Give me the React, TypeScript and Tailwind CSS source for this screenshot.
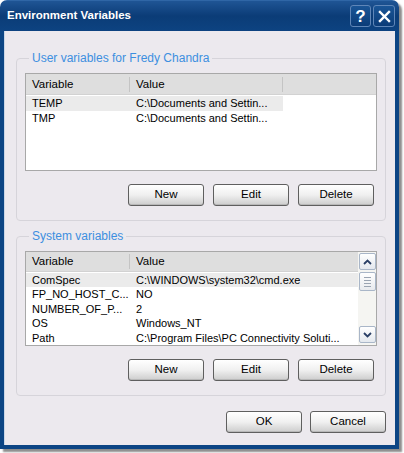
import { ReactNode } from 'react';

const font = { fontFamily: '"Liberation Sans", Arial, sans-serif' };

type Row = { name: string; value: string; selected?: boolean };

const userVars: Row[] = [
  { name: 'TEMP', value: 'C:\\Documents and Settin...', selected: true },
  { name: 'TMP', value: 'C:\\Documents and Settin...' },
];

const systemVars: Row[] = [
  { name: 'ComSpec', value: 'C:\\WINDOWS\\system32\\cmd.exe', selected: true },
  { name: 'FP_NO_HOST_C...', value: 'NO' },
  { name: 'NUMBER_OF_P...', value: '2' },
  { name: 'OS', value: 'Windows_NT' },
  { name: 'Path', value: 'C:\\Program Files\\PC Connectivity Soluti...' },
];

function XpButton({ children }: { children: ReactNode }) {
  return (
    <button
      type="button"
      className="w-[76px] h-[22px] rounded-[3px] border border-[#5f5f5f] bg-gradient-to-b from-white via-[#f0f0f0] to-[#cdcdcd] text-[11.5px] text-black shadow-[inset_0_-1px_0_#b8b8b8]"
    >
      {children}
    </button>
  );
}

function GroupBox({ title, className, children }: { title: string; className: string; children: ReactNode }) {
  return (
    <fieldset className={`mx-[12px] mr-[9px] rounded-[4px] border border-[#d6d4da] px-[8px] ${className}`}>
      <legend className="ml-[4px] px-[3px] text-[12px] leading-[13px] text-[#3d8fe0]">{title}</legend>
      {children}
    </fieldset>
  );
}

function Header({ wide }: { wide?: boolean }) {
  return (
    <div className="flex h-[21px] items-center bg-[#dedede] text-[11.5px] border-b border-[#d2d2d2]">
      <div className="w-[104px] pl-[6px] border-r border-[#c4c4c4] h-[15px] leading-[15px]">Variable</div>
      <div className={`${wide ? 'flex-1' : 'w-[153px] border-r border-[#c4c4c4]'} pl-[6px] h-[15px] leading-[15px]`}>Value</div>
      {!wide && <div className="flex-1" />}
    </div>
  );
}

function Rows({ rows, rowH, wide }: { rows: Row[]; rowH: string; wide?: boolean }) {
  return (
    <div className="flex flex-col pt-[1px]">
      {rows.map((r) => (
        <div key={r.name} className={`flex items-center ${rowH} text-[11px]`}>
          <div className={`flex ${wide ? 'flex-1' : 'w-[257px]'} h-full items-center ${r.selected ? 'bg-[#ebebeb]' : ''}`}>
            <div className="w-[104px] shrink-0 pl-[6px] whitespace-nowrap">{r.name}</div>
            <div className="flex-1 pl-[6px] whitespace-nowrap">{r.value}</div>
          </div>
          {!wide && <div className="flex-1" />}
        </div>
      ))}
    </div>
  );
}

function ScrollBtn({ up }: { up?: boolean }) {
  return (
    <div className="h-[17px] w-[17px] rounded-[2px] border border-[#a9b6c8] bg-gradient-to-b from-white to-[#e4e8ee] flex items-center justify-center">
      <svg width="9" height="6" viewBox="0 0 9 6">
        <path
          d={up ? 'M1 5 L4.5 1.5 L8 5' : 'M1 1 L4.5 4.5 L8 1'}
          fill="none"
          stroke="#2a3f66"
          strokeWidth="1.8"
        />
      </svg>
    </div>
  );
}

function Scrollbar() {
  return (
    <div className="w-[18px] flex flex-col items-center bg-[#f5f5f2] pt-[1px] pb-[2px]">
      <ScrollBtn up />
      <div className="mt-[2px] h-[19px] w-[17px] rounded-[2px] border border-[#a9b6c8] bg-gradient-to-b from-white to-[#e8eaee] flex flex-col items-center justify-center gap-[2px]">
        <div className="h-px w-[7px] bg-[#9aa4b2]" />
        <div className="h-px w-[7px] bg-[#9aa4b2]" />
        <div className="h-px w-[7px] bg-[#9aa4b2]" />
        <div className="h-px w-[7px] bg-[#9aa4b2]" />
      </div>
      <div className="flex-1" />
      <ScrollBtn />
    </div>
  );
}

export default function App() {
  return (
    <div className="w-[404px] h-[453px] bg-white text-black" style={font}>
      <div className="w-[399px] h-[449px] flex flex-col rounded-t-[7px] overflow-hidden shadow-[3px_3px_2px_rgba(0,0,0,0.45)]">
        {/* title bar */}
        <div className="h-[31px] flex items-center pl-[7px] pr-[4px] bg-gradient-to-b from-[#1f5595] via-[#0b3c77] to-[#0d4381] border-t border-[#2f66a6]">
          <span className="text-white font-bold text-[11.5px]">Environment Variables</span>
          <div className="ml-auto flex gap-[2px]">
            <div className="w-[21px] h-[22px] rounded-[3px] border border-[#5f86b8] bg-gradient-to-b from-[#1a5596] to-[#0b3c78] flex items-center justify-center text-white font-bold text-[17px] leading-none">
              ?
            </div>
            <div className="w-[22px] h-[22px] rounded-[3px] border border-[#5f86b8] bg-gradient-to-b from-[#1a5596] to-[#0b3c78] flex items-center justify-center">
              <svg width="13" height="13" viewBox="0 0 13 13">
                <path d="M2 2 L11 11 M11 2 L2 11" stroke="white" strokeWidth="2.4" strokeLinecap="square" />
              </svg>
            </div>
          </div>
        </div>

        {/* client */}
        <div className="flex-1 flex flex-col bg-[#ece9ee] border-x-4 border-b-4 border-[#0c4584] shadow-[inset_1px_0_0_#c9d6e6]">
          <GroupBox title="User variables for Fredy Chandra" className="mt-[21px] pb-[14px]">
            <div className="mt-[8px] h-[98px] border border-[#a8a8a8] bg-white">
              <Header />
              <Rows rows={userVars} rowH="h-[15px]" />
            </div>
            <div className="mt-[13px] flex justify-end gap-[9px] pr-[3px]">
              <XpButton>New</XpButton>
              <XpButton>Edit</XpButton>
              <XpButton>Delete</XpButton>
            </div>
          </GroupBox>

          <GroupBox title="System variables" className="mt-[9px] pb-[14px]">
            <div className="mt-[8px] h-[95px] border border-[#a8a8a8] bg-white flex">
              <div className="flex-1 flex flex-col min-w-0">
                <Header wide />
                <Rows rows={systemVars} rowH="h-[14.5px]" wide />
              </div>
              <Scrollbar />
            </div>
            <div className="mt-[13px] flex justify-end gap-[9px] pr-[3px]">
              <XpButton>New</XpButton>
              <XpButton>Edit</XpButton>
              <XpButton>Delete</XpButton>
            </div>
          </GroupBox>

          <div className="mt-[15px] mr-[9px] flex justify-end gap-[8px]">
            <XpButton>OK</XpButton>
            <XpButton>Cancel</XpButton>
          </div>
        </div>
      </div>
    </div>
  );
}
